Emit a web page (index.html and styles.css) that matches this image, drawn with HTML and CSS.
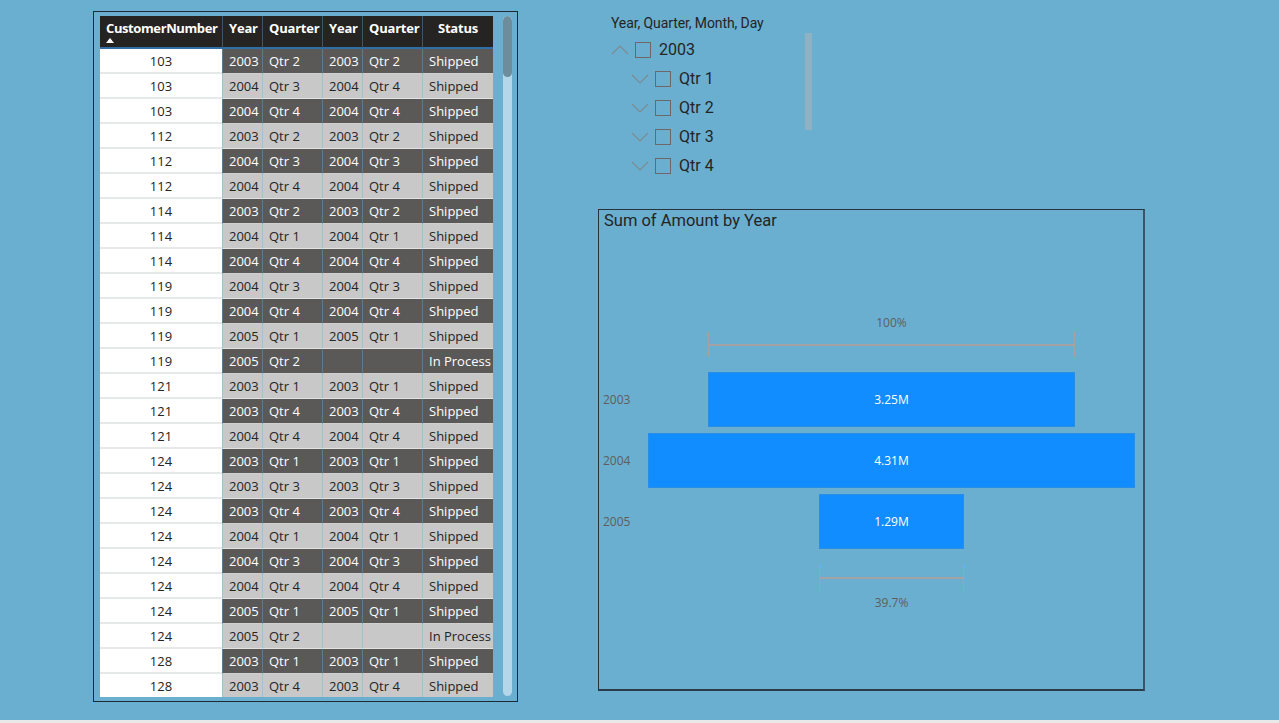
FILE: index.html
```html
<!DOCTYPE html>
<html lang="en">
<head>
<meta charset="utf-8">
<title>Report</title>
<link rel="stylesheet" href="styles.css">
</head>
<body>
<div class="page">

  <section class="visual table-visual">
    <div class="table-wrap">
      <div class="grid">
        <div class="hd hd-cust">CustomerNumber<span class="sort"></span></div>
        <div class="hd">Year</div>
        <div class="hd">Quarter</div>
        <div class="hd">Year</div>
        <div class="hd">Quarter</div>
        <div class="hd hd-center">Status</div>

        <div class="row dark"><span class="c">103</span><span>2003</span><span>Qtr 2</span><span>2003</span><span>Qtr 2</span><span>Shipped</span></div>
        <div class="row light"><span class="c">103</span><span>2004</span><span>Qtr 3</span><span>2004</span><span>Qtr 4</span><span>Shipped</span></div>
        <div class="row dark"><span class="c">103</span><span>2004</span><span>Qtr 4</span><span>2004</span><span>Qtr 4</span><span>Shipped</span></div>
        <div class="row light"><span class="c">112</span><span>2003</span><span>Qtr 2</span><span>2003</span><span>Qtr 2</span><span>Shipped</span></div>
        <div class="row dark"><span class="c">112</span><span>2004</span><span>Qtr 3</span><span>2004</span><span>Qtr 3</span><span>Shipped</span></div>
        <div class="row light"><span class="c">112</span><span>2004</span><span>Qtr 4</span><span>2004</span><span>Qtr 4</span><span>Shipped</span></div>
        <div class="row dark"><span class="c">114</span><span>2003</span><span>Qtr 2</span><span>2003</span><span>Qtr 2</span><span>Shipped</span></div>
        <div class="row light"><span class="c">114</span><span>2004</span><span>Qtr 1</span><span>2004</span><span>Qtr 1</span><span>Shipped</span></div>
        <div class="row dark"><span class="c">114</span><span>2004</span><span>Qtr 4</span><span>2004</span><span>Qtr 4</span><span>Shipped</span></div>
        <div class="row light"><span class="c">119</span><span>2004</span><span>Qtr 3</span><span>2004</span><span>Qtr 3</span><span>Shipped</span></div>
        <div class="row dark"><span class="c">119</span><span>2004</span><span>Qtr 4</span><span>2004</span><span>Qtr 4</span><span>Shipped</span></div>
        <div class="row light"><span class="c">119</span><span>2005</span><span>Qtr 1</span><span>2005</span><span>Qtr 1</span><span>Shipped</span></div>
        <div class="row dark"><span class="c">119</span><span>2005</span><span>Qtr 2</span><span></span><span></span><span>In Process</span></div>
        <div class="row light"><span class="c">121</span><span>2003</span><span>Qtr 1</span><span>2003</span><span>Qtr 1</span><span>Shipped</span></div>
        <div class="row dark"><span class="c">121</span><span>2003</span><span>Qtr 4</span><span>2003</span><span>Qtr 4</span><span>Shipped</span></div>
        <div class="row light"><span class="c">121</span><span>2004</span><span>Qtr 4</span><span>2004</span><span>Qtr 4</span><span>Shipped</span></div>
        <div class="row dark"><span class="c">124</span><span>2003</span><span>Qtr 1</span><span>2003</span><span>Qtr 1</span><span>Shipped</span></div>
        <div class="row light"><span class="c">124</span><span>2003</span><span>Qtr 3</span><span>2003</span><span>Qtr 3</span><span>Shipped</span></div>
        <div class="row dark"><span class="c">124</span><span>2003</span><span>Qtr 4</span><span>2003</span><span>Qtr 4</span><span>Shipped</span></div>
        <div class="row light"><span class="c">124</span><span>2004</span><span>Qtr 1</span><span>2004</span><span>Qtr 1</span><span>Shipped</span></div>
        <div class="row dark"><span class="c">124</span><span>2004</span><span>Qtr 3</span><span>2004</span><span>Qtr 3</span><span>Shipped</span></div>
        <div class="row light"><span class="c">124</span><span>2004</span><span>Qtr 4</span><span>2004</span><span>Qtr 4</span><span>Shipped</span></div>
        <div class="row dark"><span class="c">124</span><span>2005</span><span>Qtr 1</span><span>2005</span><span>Qtr 1</span><span>Shipped</span></div>
        <div class="row light"><span class="c">124</span><span>2005</span><span>Qtr 2</span><span></span><span></span><span>In Process</span></div>
        <div class="row dark"><span class="c">128</span><span>2003</span><span>Qtr 1</span><span>2003</span><span>Qtr 1</span><span>Shipped</span></div>
        <div class="row light"><span class="c">128</span><span>2003</span><span>Qtr 4</span><span>2003</span><span>Qtr 4</span><span>Shipped</span></div>
      </div>
      <div class="vscroll"><div class="vthumb"></div></div>
    </div>
  </section>

  <section class="visual slicer">
    <div class="slicer-title">Year, Quarter, Month, Day</div>
    <div class="slicer-body">
      <ul class="tree">
        <li class="node lvl0">
          <svg class="chev" width="18" height="10" viewBox="0 0 18 10"><polyline points="1,9 9,1 17,9" /></svg>
          <span class="box"></span><span class="lbl">2003</span>
        </li>
        <li class="node lvl1">
          <svg class="chev" width="18" height="10" viewBox="0 0 18 10"><polyline points="1,1 9,9 17,1" /></svg>
          <span class="box"></span><span class="lbl">Qtr 1</span>
        </li>
        <li class="node lvl1">
          <svg class="chev" width="18" height="10" viewBox="0 0 18 10"><polyline points="1,1 9,9 17,1" /></svg>
          <span class="box"></span><span class="lbl">Qtr 2</span>
        </li>
        <li class="node lvl1">
          <svg class="chev" width="18" height="10" viewBox="0 0 18 10"><polyline points="1,1 9,9 17,1" /></svg>
          <span class="box"></span><span class="lbl">Qtr 3</span>
        </li>
        <li class="node lvl1">
          <svg class="chev" width="18" height="10" viewBox="0 0 18 10"><polyline points="1,1 9,9 17,1" /></svg>
          <span class="box"></span><span class="lbl">Qtr 4</span>
        </li>
      </ul>
      <div class="slicer-scroll"></div>
    </div>
  </section>

  <section class="visual chart">
    <div class="chart-title">Sum of Amount by Year</div>
    <div class="funnel">
      <div class="axis-cell"></div>
      <div class="bar-cell"><span class="pct">100%</span></div>
      <div class="axis-cell"></div>
      <div class="bar-cell"><div class="bracket top" style="width:367px"></div></div>

      <div class="axis-cell yr first">2003</div>
      <div class="bar-cell first"><div class="bar" style="width:367px">3.25M</div></div>
      <div class="axis-cell yr">2004</div>
      <div class="bar-cell"><div class="bar" style="width:487px">4.31M</div></div>
      <div class="axis-cell yr">2005</div>
      <div class="bar-cell"><div class="bar" style="width:145px">1.29M</div></div>

      <div class="axis-cell"></div>
      <div class="bar-cell"><div class="bracket bottom" style="width:145px"></div></div>
      <div class="axis-cell"></div>
      <div class="bar-cell"><span class="pct low">39.7%</span></div>
    </div>
  </section>

</div>
</body>
</html>
```

FILE: styles.css
```css
* { box-sizing: border-box; }

html {
  background: #e9e9e9;
}

body {
  margin: 0;
  font-family: "Segoe UI", "Open Sans", "Noto Sans", sans-serif;
}

.page {
  position: relative;
  width: 1279px;
  height: 720px;
  background: #6aafcf;
  overflow: hidden;
}

.visual {
  position: absolute;
}

/* ---------- Table ---------- */
.table-visual {
  left: 93px;
  top: 11px;
  width: 425px;
  height: 691px;
  border: 1px solid #1c2a33;
  padding: 4px 0 0 6px;
}

.table-wrap {
  display: flex;
  gap: 10px;
  height: 681px;
}

.grid {
  display: grid;
  grid-template-columns: 122px 40px 60px 40px 60px 71px;
  grid-auto-rows: min-content;
  width: 393px;
  height: 681px;
  overflow: hidden;
  align-content: start;
}

.hd {
  background: #252423;
  color: #ffffff;
  font-weight: 700;
  font-size: 13px;
  line-height: 16px;
  height: 33px;
  padding: 4px 0 0 6px;
  border-left: 1px solid #3e5566;
  border-bottom: 2px solid #2f6ea6;
  white-space: nowrap;
  letter-spacing: -0.2px;
}

.hd-cust {
  border-left: none;
  position: relative;
  letter-spacing: -0.4px;
}

.hd-center {
  text-align: center;
  padding-left: 0;
}

.sort {
  position: absolute;
  left: 6px;
  top: 22px;
  width: 0;
  height: 0;
  border-left: 4px solid transparent;
  border-right: 4px solid transparent;
  border-bottom: 5px solid #ffffff;
}

.row {
  display: contents;
}

.row span {
  height: 25px;
  line-height: 24px;
  font-size: 13px;
  padding-left: 6px;
  white-space: nowrap;
  border-left: 1px solid #5d7a8d;
  border-bottom: 1px solid #d4d4d4;
}

.row.dark span {
  background: #5a5958;
  color: #ffffff;
  border-left-color: #607a8c;
  border-bottom-color: #d0d0d0;
}

.row.light span {
  background: #c8c8c8;
  color: #252423;
  border-left-color: #a7bfcd;
  border-bottom-color: #e2e2e2;
}

.row span.c {
  background: #ffffff !important;
  color: #252423 !important;
  text-align: center;
  padding-left: 0;
  border-left: none;
  border-bottom: 2px solid #e6e9ea !important;
}

.vscroll {
  width: 9px;
  height: 680px;
  border-radius: 5px;
  background: #b3d6e8;
  overflow: hidden;
}

.vthumb {
  height: 61px;
  background: #6d8c9c;
  border-radius: 5px;
}

/* ---------- Slicer ---------- */
.slicer {
  left: 611px;
  top: 13px;
  width: 205px;
  color: #252423;
}

.slicer-title {
  font-family: "Roboto", "Liberation Sans", sans-serif;
  font-size: 14px;
  line-height: 20px;
  letter-spacing: -0.1px;
}

.slicer-body {
  display: flex;
  justify-content: space-between;
}

.tree {
  list-style: none;
  margin: 0;
  padding: 0;
  margin-top: 2px;
}

.node {
  display: flex;
  align-items: center;
  height: 29px;
  gap: 0;
}

.lvl1 {
  padding-left: 20px;
}

.chev {
  fill: none;
  stroke: #7d8b93;
  stroke-width: 1.2;
  margin-right: 6px;
}

.box {
  width: 16px;
  height: 16px;
  border: 1px solid #6f6767;
  margin-right: 8px;
}

.lbl {
  font-family: "Roboto", "Liberation Sans", sans-serif;
  font-size: 16px;
}

.slicer-scroll {
  width: 7px;
  height: 97px;
  background: #8fb2c3;
  margin-top: 0;
  margin-right: 4px;
}

/* ---------- Chart ---------- */
.chart {
  left: 598px;
  top: 209px;
  width: 547px;
  height: 482px;
  border: 1px solid #25333c;
  border-right: 2px solid #3b5566;
  border-bottom: 2px solid #2b3d48;
}

.chart-title {
  font-family: "Roboto", "Liberation Sans", sans-serif;
  font-size: 16.5px;
  line-height: 21px;
  padding-left: 5px;
  color: #252423;
}

.funnel {
  display: grid;
  grid-template-columns: 45px 487px;
  padding-left: 4px;
  margin-top: 84px;
}

.bar-cell {
  display: flex;
  justify-content: center;
}

.axis-cell.yr {
  font-size: 12px;
  color: #605e5c;
  display: flex;
  align-items: center;
  height: 55px;
  margin-top: 6px;
}

.bar-cell:has(.bar) {
  margin-top: 6px;
}

.axis-cell.first,
.bar-cell.first {
  margin-top: 15px;
}

.pct {
  font-size: 12px;
  line-height: 16px;
  color: #605e5c;
}

.pct.low {
  margin-top: 3px;
}

.bracket {
  position: relative;
  border-left: 1px solid #a3a3a3;
  border-right: 1px solid #a3a3a3;
}

.bracket::after {
  content: "";
  position: absolute;
  left: 0;
  right: 0;
  top: 50%;
  border-top: 2px solid #a3a3a3;
  transform: translateY(-1px);
}

.bracket.top {
  height: 25px;
  margin-top: 1px;
}

.bracket.bottom {
  height: 28px;
  margin-top: 15px;
}

.bar {
  height: 55px;
  background: #118dff;
  color: #ffffff;
  font-size: 12px;
  display: flex;
  align-items: center;
  justify-content: center;
  border: 1px solid #2a8ee6;
}
```
